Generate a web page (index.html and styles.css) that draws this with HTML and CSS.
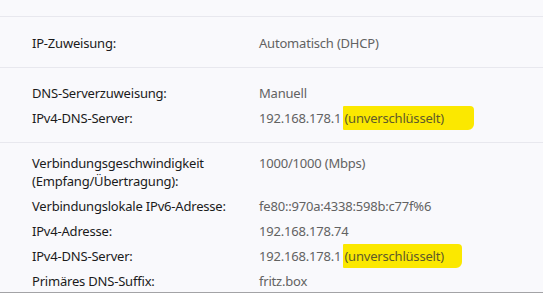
FILE: index.html
```html
<!DOCTYPE html>
<html lang="de">
<head>
    <meta charset="UTF-8">
    <title>Netzwerkeigenschaften</title>
    <link rel="stylesheet" href="styles.css">
</head>
<body>
    <div class="panel">
        <div class="top-gap"></div>
        <div class="section section-ip">
            <div class="label">IP-Zuweisung:</div>
            <div class="value">Automatisch (DHCP)</div>
        </div>
        <div class="section section-dns">
            <div class="label">DNS-Serverzuweisung:</div>
            <div class="value">Manuell</div>
            <div class="label">IPv4-DNS-Server:</div>
            <div class="value">192.168.178.1 <span class="mark mark-long">(unverschlüsselt)</span></div>
        </div>
        <div class="section section-props">
            <div class="label">Verbindungsgeschwindigkeit (Empfang/Übertragung):</div>
            <div class="value">1000/1000 (Mbps)</div>
            <div class="label">Verbindungslokale IPv6-Adresse:</div>
            <div class="value">fe80::970a:4338:598b:c77f%6</div>
            <div class="label">IPv4-Adresse:</div>
            <div class="value">192.168.178.74</div>
            <div class="label">IPv4-DNS-Server:</div>
            <div class="value">192.168.178.1 <span class="mark">(unverschlüsselt)</span></div>
            <div class="label">Primäres DNS-Suffix:</div>
            <div class="value">fritz.box</div>
        </div>
    </div>
</body>
</html>
```

FILE: styles.css
```css
html, body {
    margin: 0;
    padding: 0;
    height: 100%;
    overflow: hidden;
}
body {
    font-family: 'Segoe UI', 'Noto Sans', sans-serif;
    font-size: 13px;
    letter-spacing: -0.2px;
    background: #ffffff;
}
.panel {
    background: #f9f9fc;
    height: 292px;
    border-bottom: 1px solid #a3a3a6;
}
.top-gap {
    height: 16px;
}
.section {
    display: grid;
    grid-template-columns: 210px 1fr;
    column-gap: 17px;
    row-gap: 7px;
    padding: 0 32px;
    border-top: 1px solid #e8e8ee;
    line-height: 18px;
}
.section-ip {
    padding-top: 17px;
    padding-bottom: 15px;
}
.section-dns {
    padding-top: 16px;
    padding-bottom: 15px;
}
.section-props {
    padding-top: 11px;
}
.label {
    color: #1b1b1b;
}
.value {
    color: #626262;
    white-space: nowrap;
}
.mark {
    background: #fbe800;
    padding: 3px 18px 3px 1px;
    margin-left: -1px;
    border-radius: 1px 4px 6px 1px;
    color: #5e5a2a;
}
.mark-long {
    padding-right: 30px;
}
```
